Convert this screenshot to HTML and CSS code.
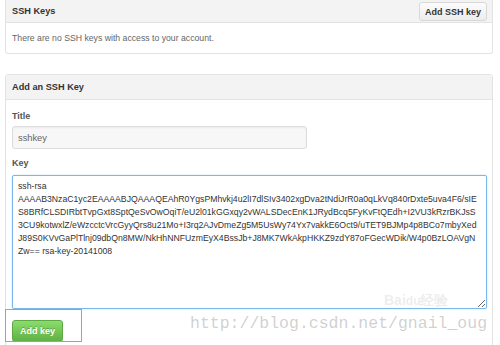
FILE: index.html
```html
<!DOCTYPE html>
<html>
<head>
<meta charset="utf-8">
<link rel="stylesheet" href="styles.css">
</head>
<body>
<div class="page">
  <section class="panel panel-keys">
    <div class="panel-head">
      <h3 class="panel-title">SSH Keys</h3>
      <button class="btn btn-light">Add SSH key</button>
    </div>
    <div class="panel-body empty">There are no SSH keys with access to your account.</div>
  </section>

  <section class="panel panel-add">
    <div class="panel-head">
      <h3 class="panel-title">Add an SSH Key</h3>
    </div>
    <div class="panel-body form">
      <label class="field-label">Title</label>
      <input class="field-input" type="text" value="sshkey">
      <label class="field-label key-label">Key</label>
      <textarea class="field-area">ssh-rsa
AAAAB3NzaC1yc2EAAAABJQAAAQEAhR0YgsPMhvkj4u2lI7dlSIv3402xgDva2tNdiJrR0a0qLkVq840rDxte5uva4F6/sIE
S8BRfCLSDIRbtTvpGxt8SptQeSvOwOqiT/eU2l01kGGxqy2vWALSDecEnK1JRydBcq5FyKvFtQEdh+I2VU3kRzrBKJsS
3CU9kotwxlZ/eWzcctcVrcGyyQrs8u21Mo+I3rq2AJvDmeZg5M5UsWy74Yx7vakkE6Oct9/uTET9BJMp4p8BCo7mbyXed
J89S0KVvGaPlTlnj09dbQn8MW/NkHhNNFUzmEyX4BssJb+J8MK7WkAkpHKKZ9zdY87oFGecWDik/W4p0BzLOAVgN
Zw== rsa-key-20141008
</textarea>
      <div class="actions">
        <button class="btn btn-green">Add key</button>
      </div>
    </div>
  </section>
</div>
<div class="highlight"></div>
<div class="wm-baidu">Bai<span class="du">du</span>经验</div>
<div class="wm-url">http://blog.csdn.net/gnail_oug</div>
</body>
</html>
```

FILE: styles.css
```css
html, body {
  margin: 0;
  padding: 0;
  background: #fff;
  overflow: hidden;
}
body {
  font-family: "Liberation Sans", Arial, sans-serif;
  color: #333;
  width: 500px;
  height: 345px;
  position: relative;
}
.page {
  padding-left: 5px;
  width: 488px;
}
.panel {
  border: 1px solid #e3e3e3;
  border-radius: 3px;
  background: #fff;
}
.panel-keys {
  border-top: none;
  border-radius: 0 0 3px 3px;
}
.panel-add {
  margin-top: 20px;
  height: 300px;
}
.panel-head {
  display: flex;
  align-items: center;
  justify-content: space-between;
  background: #f3f3f3;
  border-bottom: 1px solid #e3e3e3;
  padding: 0 5px 0 6px;
  height: 22px;
}
.panel-add .panel-head {
  height: 24px;
}
.panel-title {
  margin: 0;
  font-size: 9.2px;
  font-weight: bold;
  color: #333;
}
.btn {
  font-family: "Liberation Sans", Arial, sans-serif;
  font-weight: bold;
  font-size: 9px;
  border-radius: 3px;
  cursor: pointer;
}
.btn-light {
  height: 19px;
  margin-top: 1px;
  width: 68px;
  padding: 0;
  color: #333;
  background: linear-gradient(#fcfcfc, #ececec);
  border: 1px solid #d8d8d8;
}
.panel-body.empty {
  height: 30px;
  line-height: 30px;
  padding-left: 6px;
  font-size: 8.7px;
  color: #666;
}
.panel-body.form {
  padding: 9px 5px 0 6px;
  display: flex;
  flex-direction: column;
  align-items: flex-start;
}
.field-label {
  font-size: 9px;
  font-weight: bold;
  color: #555;
  line-height: 14px;
  margin-bottom: 3px;
}
.key-label {
  margin-top: 7px;
  margin-bottom: 5px;
}
.field-input {
  box-sizing: border-box;
  width: 295px;
  height: 23px;
  border: 1px solid #ddd;
  border-radius: 3px;
  background: #f7f7f7;
  padding: 0 5px;
  font-family: "Liberation Sans", Arial, sans-serif;
  font-size: 9.3px;
  color: #666;
  box-shadow: inset 0 1px 2px rgba(0,0,0,0.05);
}
.field-area {
  box-sizing: border-box;
  width: 475px;
  height: 134px;
  border: 1px solid #77b9ee;
  border-radius: 2px;
  padding: 4px 5px;
  font-family: "Liberation Sans", Arial, sans-serif;
  font-size: 8.7px;
  line-height: 13px;
  color: #333;
  white-space: pre;
  overflow: hidden;
  outline: none;
  resize: both;
  box-shadow: 0 0 2px rgba(81,167,232,0.4);
}
.actions {
  margin-top: 11px;
}
.btn-green {
  height: 22px;
  width: 51px;
  padding: 0;
  color: #fff;
  background: linear-gradient(#8add6d, #60b044);
  border: 1px solid #5ca941;
  text-shadow: 0 -1px 0 rgba(0,0,0,0.25);
}
.highlight {
  position: absolute;
  left: 5px;
  top: 309px;
  width: 75px;
  height: 31px;
  border: 1px solid #f08080;
}
.wm-url {
  position: absolute;
  left: 190px;
  top: 314px;
  font-family: "Liberation Mono", "DejaVu Sans Mono", monospace;
  font-size: 16.5px;
  color: rgba(150,150,150,0.45);
  letter-spacing: 0;
}
.wm-baidu {
  position: absolute;
  left: 384px;
  top: 292px;
  font-family: "Liberation Sans", Arial, sans-serif;
  font-size: 14px;
  font-weight: bold;
  color: rgba(160,160,160,0.2);
}
.wm-baidu .du {
  font-size: 12px;
}
```
